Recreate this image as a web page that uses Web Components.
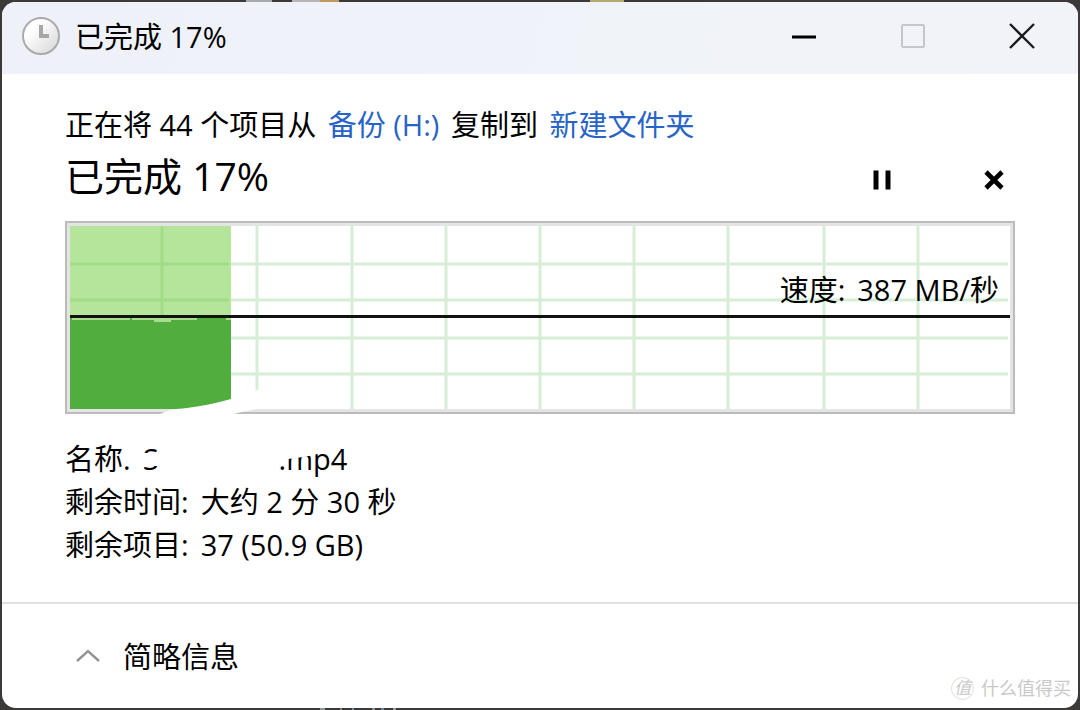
<!DOCTYPE html>
<html lang="zh-CN">
<head>
<meta charset="utf-8">
<meta name="viewport" content="width=device-width, initial-scale=1">
<title>已完成 17%</title>
<style>
  body { margin: 0; background: #3b3a39; color: #000; font: 29px/43px "Open Sans", "Noto Sans CJK SC", sans-serif; }
</style>
</head>
<body>
<copy-dialog></copy-dialog>
<script>
const define = (name, html) => {
  const template = document.createElement('template');
  template.innerHTML = html;
  customElements.define(name, class extends HTMLElement {
    constructor() {
      super();
      this.attachShadow({ mode: 'open' }).append(template.content.cloneNode(true));
    }
  });
};

define('icon-button', `
  <style>
    :host { display: block; width: var(--w, 42px); height: var(--h, 42px); }
    button { display: grid; place-items: center; width: 100%; height: 100%; margin: 0; padding: 0; border: 0; background: none; color: inherit; }
  </style>
  <button type="button"><slot></slot></button>`);

define('title-bar', `
  <style>
    :host { display: flex; align-items: center; height: 72px; padding-right: 2px; background: linear-gradient(100deg, #eef2f8, #f1f3f9); }
    .clock { margin: 0 14px 4px 19px; flex: none; }
    h1 { flex: 1; margin: 0 0 3px; font-size: 29px; font-weight: 400; line-height: 43px; }
    icon-button { --w: 109px; --h: 72px; }
    icon-button svg { margin-bottom: 4px; }
  </style>
  <svg class="clock" width="40" height="40" viewBox="0 0 40 40" aria-hidden="true">
    <defs><linearGradient id="g" x1="0" y1="0" x2="1" y2="1"><stop offset=".3" stop-color="#fff"/><stop offset="1" stop-color="#d4d4d4"/></linearGradient></defs>
    <circle cx="20" cy="20" r="18" fill="url(#g)" stroke="#aaa" stroke-width="2"/>
    <path d="M20 9V20H28" fill="none" stroke="#a7a7a7" stroke-width="4"/>
  </svg>
  <h1><slot></slot></h1>
  <icon-button><svg role="img" aria-label="最小化" width="26" height="26" viewBox="0 0 26 26"><path d="M1 14H25" stroke="#000" stroke-width="3"/></svg></icon-button>
  <icon-button><svg role="img" aria-label="最大化" width="26" height="26" viewBox="0 0 26 26"><rect x="2" y="2" width="22" height="22" rx="1" fill="none" stroke="#c5c6c9" stroke-width="2"/></svg></icon-button>
  <icon-button><svg role="img" aria-label="关闭" width="26" height="26" viewBox="0 0 26 26"><path d="M1 1L25 25M25 1L1 25" stroke="#1b1c1f" stroke-width="2.4"/></svg></icon-button>`);

define('progress-head', `
  <style>
    :host { display: flex; align-items: center; height: 60px; margin-bottom: 15px; gap: 70px; }
    h2 { flex: 1; margin: 0; font-size: 39px; font-weight: 400; line-height: 60px; }
    icon-button { margin-top: 8px; }
  </style>
  <h2><slot></slot></h2>
  <icon-button><svg role="img" aria-label="暂停" width="20" height="20" viewBox="0 0 20 20"><path d="M4 .5V19.5M16 .5V19.5" stroke="#000" stroke-width="5"/></svg></icon-button>
  <icon-button><svg role="img" aria-label="取消" width="20" height="20" viewBox="0 0 20 20"><path d="M2 2L18 18M18 2L2 18" stroke="#000" stroke-width="4.6"/></svg></icon-button>`);

define('speed-graph', `
  <style>
    :host { display: block; position: relative; height: 193px; box-sizing: border-box; border: 2px solid #bbb; padding: 3px; background: #e4e4e4; }
    .plot { display: block; width: 100%; height: 100%; background: #fff; }
    .speed { position: absolute; right: 14px; top: 45px; display: flex; gap: 12px; white-space: nowrap; }
    .smear { position: absolute; left: 93px; bottom: -2px; }
  </style>
  <svg class="plot" viewBox="0 0 940 183" preserveAspectRatio="none" aria-hidden="true">
    <g stroke="#d5eed5" stroke-width="3" fill="none">
      <path d="M187 0V183M282 0V183M376 0V183M470 0V183M564 0V183M658 0V183M754 0V183M848 0V183"/>
      <path d="M0 38H938M0 74H938M0 112H938M0 148H938"/>
    </g>
    <path d="M0 0H161V94H0Z" fill="#b5e59b"/>
    <path d="M92 0V94M0 38H159M0 74H159" stroke="#a2dc88" stroke-width="3"/>
    <path d="M0 92H161V183H0Z" fill="#50ad3e"/>
    <path d="M2 91H60V94H2ZM62 91H127V94H101V96H84V94H62ZM156 91H161V94H156Z" fill="#a9dc91"/>
    <path d="M0 90.500H940" stroke="#111" stroke-width="3"/>
  </svg>
  <svg class="smear" width="110" height="24" viewBox="0 0 110 24" aria-hidden="true"><path d="M0 24C8 20 15 19 27 18C43 16 57 13 71 9C82 6 91 2 98 0L106 0V18C94 19 81 22 74 24Z" fill="#fff"/></svg>
  <div class="speed"><slot name="label"></slot><slot></slot></div>`);

define('copy-details', `
  <style>
    :host { display: block; margin-top: 23px; }
    dl { margin: 0; }
    .row { display: flex; gap: 12px; position: relative; white-space: pre; }
    dt, dd { margin: 0; }
    dd { display: flex; }
    .ext { margin-left: 120px; }
    .smear { position: absolute; left: 58px; top: 0; }
  </style>
  <dl>
    <div class="row"><dt>名称:</dt><dd><span>S</span><span class="ext">.mp4</span></dd>
      <svg class="smear" width="230" height="43" viewBox="0 0 230 43" aria-hidden="true">
        <path d="M0 4H12V24H0ZM16 16H50V29H16ZM36 4H145V40H36Z" fill="#fff"/>
        <path d="M140 4H208L200 15C190 19 180 20 165 22L158 27H140Z" fill="#fff"/>
      </svg></div>
    <div class="row"><dt>剩余时间:</dt><dd>大约 2 分 30 秒</dd></div>
    <div class="row"><dt>剩余项目:</dt><dd>37 (50.9 GB)</dd></div>
  </dl>`);

define('dialog-footer', `
  <style>
    :host { display: flex; align-items: center; flex: 1; border-top: 2px solid #e1e1e1; padding: 0 72px; }
    button { display: flex; align-items: center; gap: 21px; border: 0; padding: 0; background: none; color: #000; font: inherit; }
  </style>
  <button type="button"><svg width="28" height="16" viewBox="0 0 28 16" aria-hidden="true"><path d="M3 13L14 3L25 13" fill="none" stroke="#929292" stroke-width="2.4"/></svg><slot></slot></button>`);

define('water-mark', `
  <style>
    :host { display: flex; align-items: center; gap: 7px; position: absolute; right: 7px; bottom: 8px; color: #c9c9c9; font-size: 18px; line-height: 24px; }
    i { display: grid; place-items: center; box-sizing: border-box; width: 23px; height: 23px; border: 1px solid #ddd; border-radius: 50%; font-size: 17px; line-height: 20px; }
  </style>
  <i>值</i><span><slot></slot></span>`);

define('copy-dialog', `
  <style>
    :host { display: flex; min-height: 100vh; box-sizing: border-box; padding: 2px;
      background: linear-gradient(90deg, #a4aaad 26px, transparent 26px 46px, #b5b5b5 46px 74px, #bd9960 74px 93px, transparent 93px 344px, #b4a770 344px 378px, transparent 378px) 246px 0 / 420px 2px no-repeat,
      linear-gradient(90deg, #8f9698 5px, transparent 5px 20px, #927f62 20px 22px, transparent 22px 32px, #788995 32px 34px, transparent 34px 52px, #8d8f86 52px 55px, transparent 55px 61px, #6688a0 61px 64px, transparent 64px 73px, #999 73px 76px, transparent 76px) 320px 100% / 90px 2px no-repeat, #3b3a39; }
    .window { position: relative; flex: 1; display: flex; flex-direction: column; overflow: hidden; border-radius: 14px; background: #fff; }
    main { padding: 29px 63px 36px; }
    p { margin: 0; white-space: nowrap; }
    a { margin: 0 4px; color: #2864c7; text-decoration: none; }
  </style>
  <div class="window">
    <title-bar>已完成 17%</title-bar>
    <main>
      <p>正在将 44 个项目从 <a href="#source">备份 (H:)</a> 复制到 <a href="#target">新建文件夹</a></p>
      <progress-head>已完成 17%</progress-head>
      <speed-graph><span slot="label">速度:</span><span>387 MB/秒</span></speed-graph>
      <copy-details></copy-details>
    </main>
    <dialog-footer>简略信息</dialog-footer>
    <water-mark>什么值得买</water-mark>
  </div>`);
</script>
</body>
</html>
